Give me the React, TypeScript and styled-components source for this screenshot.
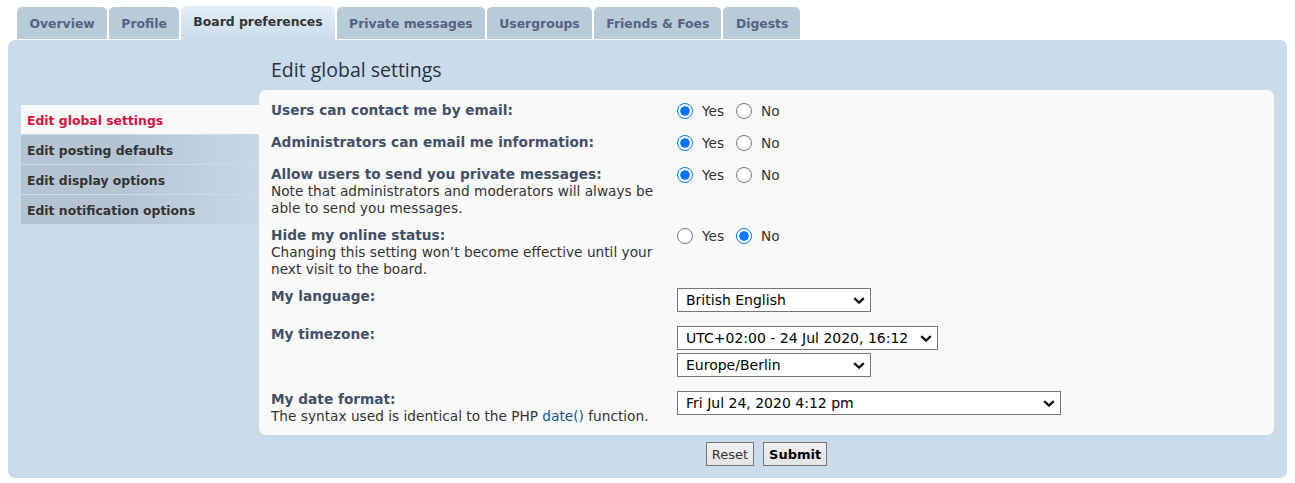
import React from 'react';
import styled, { createGlobalStyle } from 'styled-components';

const GlobalStyle = createGlobalStyle`
  html, body { margin: 0; padding: 0; background: #ffffff; }
  body { font-family: "DejaVu Sans", Verdana, sans-serif; color: #333333; }
  * { box-sizing: border-box; }
`;

const Page = styled.div`
  padding: 6px 8px 5px;
`;

const Tabs = styled.ul`
  display: flex;
  align-items: flex-end;
  gap: 2px;
  height: 34px;
  margin: 0;
  padding: 0 0 0 9px;
  list-style: none;
`;

const Tab = styled.li<{ $active?: boolean }>`
  display: flex;
  align-items: center;
  height: ${p => (p.$active ? '34px' : '32px')};
  margin-bottom: ${p => (p.$active ? '0' : '1px')};
  padding: 0 12px ${p => (p.$active ? '3px' : '0')} 12.5px;
  border-radius: 5px 5px 0 0;
  background: ${p => (p.$active ? 'linear-gradient(to bottom, #e4eef8 0%, #cadceb 100%)' : '#b9cad9')};
  color: ${p => (p.$active ? '#333333' : '#536482')};
  font-size: 12.4px;
  font-weight: bold;
  white-space: nowrap;
`;

const Panel = styled.div`
  display: grid;
  grid-template-columns: 238px 1fr;
  padding: 0 13px 12px;
  border-radius: 7px;
  background: #cadceb;
`;

const Nav = styled.ul`
  margin: 0;
  padding: 65px 0 0;
  list-style: none;
`;

const NavItem = styled.li<{ $active?: boolean }>`
  height: 29px;
  margin-bottom: 1px;
  padding: 7px 6px 5px;
  line-height: 17px;
  font-size: 12.4px;
  font-weight: bold;
  color: ${p => (p.$active ? '#d31141' : '#333333')};
  background: ${p => (p.$active ? '#f9f9f9' : 'linear-gradient(to right, #b4c4d3 40%, #c8d8e6 100%)')};
`;

const Main = styled.div`
  display: flex;
  flex-direction: column;
`;

const Heading = styled.h2`
  height: 50px;
  margin: 0;
  padding: 18px 12px 0;
  font-family: "Open Sans", "DejaVu Sans", sans-serif;
  font-size: 19.5px;
  line-height: 24px;
  font-weight: normal;
  color: #28313f;
`;

const Inner = styled.div`
  padding: 7px 12px 5px;
  border-radius: 7px;
  background: #f9f9f9;
`;

const Row = styled.div`
  display: flex;
  padding: 5px 0;
`;

const Term = styled.div`
  flex: none;
  width: 406px;
  font-size: 13.7px;
  line-height: 17px;
  color: #333333;
`;

const Label = styled.div`
  font-weight: bold;
  color: #425067;
`;

const Link = styled.span`
  color: #105289;
`;

const Def = styled.div<{ $gap?: number }>`
  display: flex;
  flex-direction: column;
  gap: ${p => p.$gap ?? 0}px;
  padding-bottom: 4px;
`;

const RadioGroup = styled.div`
  display: flex;
  align-items: center;
  height: 17px;
  margin-bottom: 1px;
`;

const RadioLabel = styled.label`
  display: inline-flex;
  align-items: center;
  gap: 9px;
  margin-right: 12px;
  font-size: 13.7px;
  color: #333333;
`;

const Radio = styled.input`
  width: 16px;
  height: 16px;
  margin: 0;
  accent-color: #0075ff;
`;

const SelectBox = styled.div<{ $w: number }>`
  position: relative;
  width: ${p => p.$w}px;
  height: 24px;
`;

const Select = styled.select`
  appearance: none;
  width: 100%;
  height: 24px;
  padding: 0 24px 0 8px;
  border: 1px solid #767676;
  border-radius: 0;
  background: #ffffff;
  font-family: "DejaVu Sans", Verdana, sans-serif;
  font-size: 14px;
  color: #000000;
`;

const Chevron = styled.svg`
  position: absolute;
  right: 6px;
  top: 9px;
  pointer-events: none;
`;

const Buttons = styled.div`
  display: flex;
  justify-content: center;
  gap: 9px;
  margin-top: 7px;
`;

const Button = styled.button<{ $primary?: boolean }>`
  height: 24px;
  padding: 0 5px;
  border: 1px solid #767676;
  border-radius: 0;
  background: linear-gradient(to bottom, #f0f0f0, #e4e4e4);
  font-family: "DejaVu Sans", Verdana, sans-serif;
  font-size: 13px;
  font-weight: ${p => (p.$primary ? 'bold' : 'normal')};
  color: ${p => (p.$primary ? '#000000' : '#333333')};
`;

function YesNo({ name, yes }: { name: string; yes: boolean }) {
  return (
    <RadioGroup>
      <RadioLabel>
        <Radio type="radio" name={name} defaultChecked={yes} />
        Yes
      </RadioLabel>
      <RadioLabel>
        <Radio type="radio" name={name} defaultChecked={!yes} />
        No
      </RadioLabel>
    </RadioGroup>
  );
}

function Dropdown({ width, value }: { width: number; value: string }) {
  return (
    <SelectBox $w={width}>
      <Select defaultValue={value}>
        <option>{value}</option>
      </Select>
      <Chevron width="12" height="7" viewBox="0 0 12 7">
        <path d="M1.2 1.2 L6 5.6 L10.8 1.2" fill="none" stroke="#111" strokeWidth="2.3" />
      </Chevron>
    </SelectBox>
  );
}

const tabs = ['Overview', 'Profile', 'Board preferences', 'Private messages', 'Usergroups', 'Friends & Foes', 'Digests'];
const navItems = ['Edit global settings', 'Edit posting defaults', 'Edit display options', 'Edit notification options'];

export default function App() {
  return (
    <Page>
      <GlobalStyle />
      <Tabs>
        {tabs.map(t => (
          <Tab key={t} $active={t === 'Board preferences'}>{t}</Tab>
        ))}
      </Tabs>
      <Panel>
        <Nav>
          {navItems.map((n, i) => (
            <NavItem key={n} $active={i === 0}>{n}</NavItem>
          ))}
        </Nav>
        <Main>
          <Heading>Edit global settings</Heading>
          <Inner>
            <Row>
              <Term><Label>Users can contact me by email:</Label></Term>
              <Def><YesNo name="email" yes /></Def>
            </Row>
            <Row>
              <Term><Label>Administrators can email me information:</Label></Term>
              <Def><YesNo name="admin" yes /></Def>
            </Row>
            <Row>
              <Term>
                <Label>Allow users to send you private messages:</Label>
                Note that administrators and moderators will always be<br />able to send you messages.
              </Term>
              <Def><YesNo name="pm" yes /></Def>
            </Row>
            <Row>
              <Term>
                <Label>Hide my online status:</Label>
                Changing this setting won’t become effective until your<br />next visit to the board.
              </Term>
              <Def><YesNo name="online" yes={false} /></Def>
            </Row>
            <Row>
              <Term><Label>My language:</Label></Term>
              <Def><Dropdown width={194} value="British English" /></Def>
            </Row>
            <Row>
              <Term><Label>My timezone:</Label></Term>
              <Def $gap={3}>
                <Dropdown width={261} value="UTC+02:00 - 24 Jul 2020, 16:12" />
                <Dropdown width={194} value="Europe/Berlin" />
              </Def>
            </Row>
            <Row>
              <Term>
                <Label>My date format:</Label>
                The syntax used is identical to the PHP <Link>date()</Link> function.
              </Term>
              <Def><Dropdown width={384} value="Fri Jul 24, 2020 4:12 pm" /></Def>
            </Row>
          </Inner>
          <Buttons>
            <Button>Reset</Button>
            <Button $primary>Submit</Button>
          </Buttons>
        </Main>
      </Panel>
    </Page>
  );
}
